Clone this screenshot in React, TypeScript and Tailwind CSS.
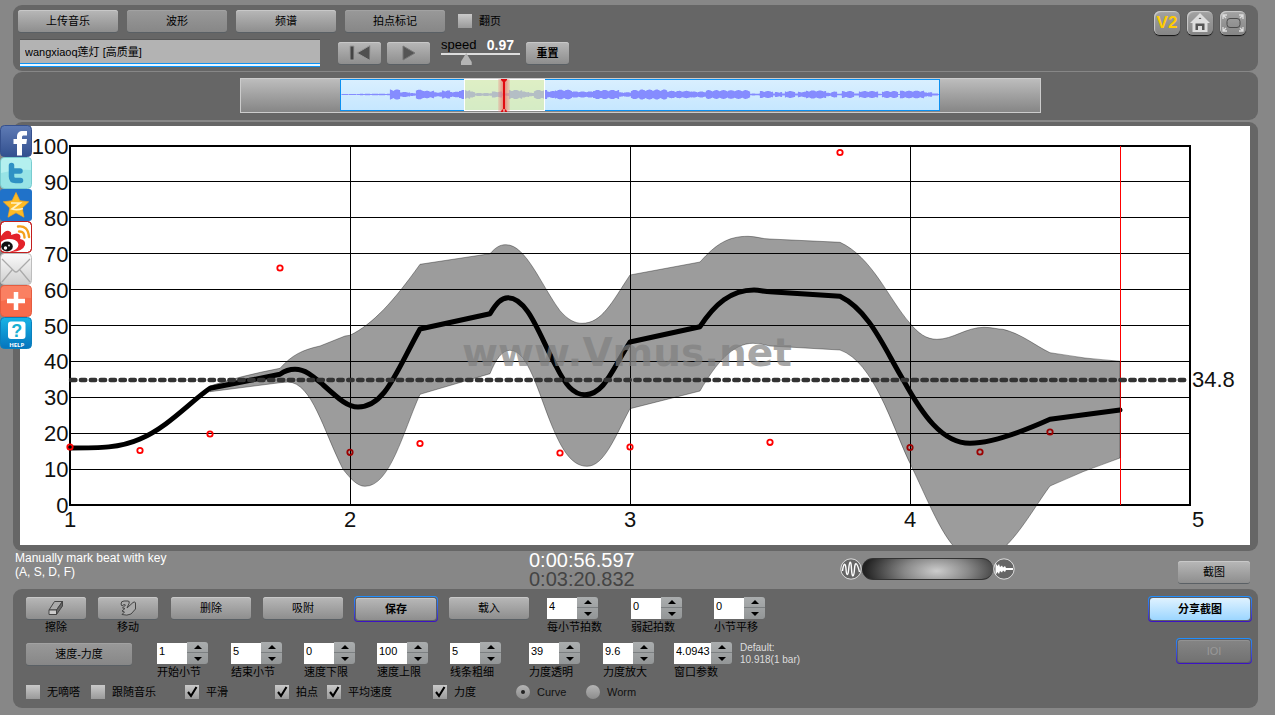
import React from "react";

const LINE =
  "M70 448 C100 448 120 448 140 439 C168 427 190 402 210 388.3 L280 374.3 C286 370 290 369.3 295 369.3 C306 369.3 314 377 323.3 385 C340 400 348 407 358 407 C385 407 396 372 420 329 L490 313.7 C496 304 501 297.7 508 297.7 C528 297.7 540 337 556 366 C565 384 573 394.7 585 394.7 C604 394.7 612 370 630 342 L700 326.7 C715 304 731 290 754 290 C760 290 765 291.7 770 291.7 L840 296.3 C870 311 885 350 903.3 380 C922 414 942 443.3 970 443.3 C990 443 1015 435 1050 419.3 L1120 410";

const BAND =
  "M210 386 Q240 376 280 368.3 C292 355 302 350 320 346 L345 336 L350 335.3 C373 324 393 302 420 264.3 L490 253.7 C496 247 500 244.7 506 244.7 C526 244.7 541 285 560 310.7 C568 320 575 323.3 582 323.3 C602 323.3 612 302 630 275 L700 262 C716 244 728 236.3 748 236.3 C756 236.3 762 239 770 239 L840 242.3 C872 257 888 298 910 323.3 C918 333 926 339.3 937 339.3 C953 339.3 966 327.3 984 327.3 C992 327.3 998 329.3 1003 329.3 C1022 334 1034 345 1050 352.7 Q1085 359 1120 361.3 L1120 458 Q1082 471 1050 486 C1030 513 1006 560 979 560 C950 560 935 515 910 463.3 C892 426 874 362 840 350 L770 346 Q760 343.3 753 343.3 C733 343.3 716 363 700 391 L630 408.7 C615 437 604 466.3 587 466.3 C570 466.3 560 445 552 426 C538 392 528 350.3 510 350.3 C502 350.3 496 359 490 373.7 L420 394.3 C403 432 390 486.3 365 486.3 C357 486.3 350 478 343 469.3 C323 430 312 382.7 288 382 L280 382.7 L210 391.7 Z";

const BEATS = [
  [70, 447], [140, 450.5], [210, 434], [280, 268], [350, 452.3], [420, 443.5],
  [560, 453], [630, 447], [770, 442.3], [840, 152.5], [910, 447.5], [980, 452], [1050, 432],
];

// [end x, amplitude] of each loudness section in the overview
const LOUDNESS = [
  [18, 0.4], [48, 0.7], [58, 4.4], [68, 2.2], [74, 1.2], [82, 4.2], [92, 3.3], [100, 2], [108, 3.6],
  [117, 2.4], [128, 4], [133, 2.6], [150, 1.3], [160, 2.6], [167, 1.2], [180, 4], [187, 2.6], [192, 1.5],
  [205, 4], [213, 3], [230, 4.2], [251, 2.7], [277, 4], [289, 2], [298, 4], [325, 4.3], [350, 3.2],
  [364, 2.6], [408, 3.8], [418, 0.8], [431, 3], [433, 1], [440, 2.2], [443, 1], [453, 3], [456, 1],
  [464, 2.4], [484, 3.5], [489, 1.5], [495, 2.5], [500, 0.8], [512, 3], [517, 1], [536, 3], [540, 0.6],
  [556, 3], [558, 0.6], [582, 3.3], [590, 2], [596, 1], [600, 0.5],
];

const wavePath = () => {
  let d = "";
  let section = 0;
  for (let x = 0; x < 599; x++) {
    while (LOUDNESS[section][0] < x) section++;
    const amp = LOUDNESS[section][1] * (0.8 + 0.35 * Math.abs(Math.sin(x * 12.9898)));
    d += `M${x + 0.5} ${(14.5 - amp).toFixed(1)}V${(14.5 + amp).toFixed(1)}`;
  }
  return d;
};

const TONES = {
  light: "bg-linear-to-b from-[#b8b8b8] to-[#8e8e8e] shadow-[inset_0_1px_0_#c8c8c8,0_1px_0_#5a6065]",
  pressed: "bg-linear-to-b from-[#999] to-[#878787] shadow-[inset_0_1px_0_#a2a2a2,0_1px_0_#5a6065]",
  blue: "bg-linear-to-b from-[#dff2ff] to-[#9cd6ff]",
  disabled: "bg-linear-to-b from-[#858585] to-[#727272] text-[#999] shadow-[inset_0_1px_0_#929292]",
};

type ButtonProps = {
  className?: string;
  label?: string;
  tone?: keyof typeof TONES;
  children: React.ReactNode;
};

const Button = ({ className = "", label, tone = "light", children }: ButtonProps) => (
  <button
    aria-label={label}
    className={`flex h-[22px] shrink-0 items-center justify-center rounded-[3px] text-[11px] leading-none ${TONES[tone]} ${className}`}
  >
    {children}
  </button>
);

const Ring = ({ className = "", children }: { className?: string; children: React.ReactNode }) => (
  <div className={`shrink-0 rounded-[4px] bg-linear-to-b from-[#1e90ff] to-[#3c0cc4] p-px ${className}`}>
    <div className="rounded-[3px] bg-[#5c5f66] p-px">{children}</div>
  </div>
);

const Check = ({ label, checked = false, className = "" }: { label: string; checked?: boolean; className?: string }) => (
  <label className={`flex shrink-0 items-center gap-[7px] text-[11px] leading-[14px] ${className}`}>
    <span className="relative block size-[14px]">
      <input
        type="checkbox"
        defaultChecked={checked}
        className="peer block size-[14px] appearance-none bg-linear-to-b from-[#c9c9c9] to-[#9a9a9a]"
      />
      <svg viewBox="0 0 14 14" className="pointer-events-none absolute inset-0 hidden size-[14px] peer-checked:block">
        <path d="M3 7 L6 11 L11.5 2" fill="none" stroke="#000" strokeWidth="2.1" />
      </svg>
    </span>
    {label}
  </label>
);

const Radio = ({ label, checked = false, className = "" }: { label: string; checked?: boolean; className?: string }) => (
  <label className={`flex shrink-0 items-center gap-[7px] text-[11px] leading-[14px] text-[#111] ${className}`}>
    <span className="relative block size-[14px]">
      <input
        type="radio"
        name="plot"
        defaultChecked={checked}
        className="peer block size-[14px] appearance-none rounded-full bg-linear-to-b from-[#b5b5b5] to-[#8c8c8c]"
      />
      <span className="pointer-events-none absolute top-[5px] left-[5px] hidden size-[4px] rounded-full bg-[#222] peer-checked:block" />
    </span>
    {label}
  </label>
);

type StepperProps = {
  id: string;
  label: string;
  value: string;
  className: string;
  inputClass?: string;
};

const Stepper = ({ id, label, value, className, inputClass = "w-[30px]" }: StepperProps) => (
  <div className={`shrink-0 ${className}`}>
    <div className="flex h-[22px]">
      <input
        id={id}
        type="text"
        defaultValue={value}
        className={`mt-px h-[21px] bg-white pb-[5px] pl-[2px] text-[11px] leading-none outline-none ${inputClass}`}
      />
      <div className="flex w-[21px] flex-col overflow-hidden rounded-r-[3px] bg-linear-to-b from-[#aaadae] to-[#939697]">
        <button aria-label={`${label} +`} className="flex h-[11px] items-center justify-center border-b border-[#7b7f81]">
          <svg viewBox="0 0 8 4" className="h-[4px] w-[8px]"><path d="M0 4 L4 0 L8 4Z" /></svg>
        </button>
        <button aria-label={`${label} -`} className="flex h-[11px] items-center justify-center">
          <svg viewBox="0 0 8 4" className="h-[4px] w-[8px]"><path d="M0 0 L4 4 L8 0Z" /></svg>
        </button>
      </div>
    </div>
    <label htmlFor={id} className="block text-[11px] leading-[16px] whitespace-nowrap">{label}</label>
  </div>
);

const ToolButton = ({ label, children }: { label: string; children: React.ReactNode }) => (
  <button
    aria-label={label}
    className="flex h-[24px] w-[26px] items-center justify-center rounded-[6px] bg-linear-to-b from-[#a3a3a3] to-[#858585] shadow-[inset_1px_1px_1px_#ccc,0_1px_1px_#111]"
  >
    {children}
  </button>
);

const Share = () => (
  <nav className="absolute top-[125px] left-0 flex flex-col">
    <a href="#facebook" aria-label="Facebook">
      <svg viewBox="0 0 32 32" className="block size-8">
        <defs>
          <linearGradient id="fb" x2="0" y2="1"><stop stopColor="#5f7bb5" /><stop offset="1" stopColor="#32508f" /></linearGradient>
        </defs>
        <rect x=".5" y=".5" width="31" height="31" rx="4" fill="url(#fb)" stroke="#35508d" />
        <path d="M17 30.5V19h-3.500v-5H17v-2.500C17 8 19 6 23 6h4v4.500h-3c-1.500 0-2 .6-2 2V14h5l-.7 5H22v11.500z" fill="#fff" />
      </svg>
    </a>
    <a href="#twitter" aria-label="Twitter">
      <svg viewBox="0 0 32 32" className="block size-8">
        <rect x=".5" y=".5" width="31" height="31" rx="4" fill="#98e4e6" stroke="#78ccd0" />
        <path d="M1 5Q1 1 5 1H27Q31 1 31 5V13Q16 12 1 16Z" fill="#b4f0ef" />
        <path d="M11.500 8.500V19.500q0 4 4 4h5M11.500 14h8.500" fill="none" stroke="#2f91c4" strokeWidth="5.500" strokeLinecap="round" />
      </svg>
    </a>
    <a href="#qzone" aria-label="QZone">
      <svg viewBox="0 0 32 32" className="block size-8">
        <rect width="32" height="32" rx="3" fill="#2072c9" />
        <path d="M16 3.500l3.900 8.200 8.800 1.100-6.500 6.200 1.800 9.200L16 23.800 8 28.200l1.800-9.200-6.500-6.200 8.800-1.100z" fill="#fdbb25" stroke="#f8a31b" strokeWidth=".7" />
        <path d="M11 14L20 14L12 20Q17 21.500 23 19.500" fill="none" stroke="#fff2c5" strokeWidth="1.700" />
      </svg>
    </a>
    <a href="#weibo" aria-label="Weibo">
      <svg viewBox="0 0 32 32" className="block size-8">
        <rect x=".5" y=".5" width="31" height="31" rx="4" fill="#fff" stroke="#c31e1e" />
        <path d="M1 15Q5 9 9 10Q12 11 11 14Q18 11 20 14Q21 16 20 18Q26 19 25 24Q23 30 12 31H4Q1 31 1 28Z" fill="#e3232a" />
        <ellipse cx="8.500" cy="24.500" rx="10" ry="6.500" transform="rotate(-8 8.500 24.500)" fill="#fff" />
        <ellipse cx="7" cy="25.500" rx="5.800" ry="5" fill="#111" />
        <circle cx="5.500" cy="27" r="1.700" fill="#fff" /><circle cx="9" cy="24.500" r=".9" fill="#fff" />
        <path d="M18 5.500Q28 4 29 16M19 10.500Q24.500 10 24.500 16.500" fill="none" stroke="#f4a01c" strokeWidth="2.400" strokeLinecap="round" />
        <rect x=".5" y=".5" width="31" height="31" rx="4" fill="none" stroke="#c31e1e" />
      </svg>
    </a>
    <a href="#mail" aria-label="Mail">
      <svg viewBox="0 0 32 32" className="block size-8">
        <defs>
          <linearGradient id="mail" x2="0" y2="1"><stop stopColor="#fafafa" /><stop offset="1" stopColor="#cfcfcf" /></linearGradient>
        </defs>
        <rect x=".5" y=".5" width="31" height="31" rx="4" fill="url(#mail)" stroke="#bdbdbd" />
        <path d="M2 6L14 18Q16 20 18 18L30 6M2 29L12 17M30 29L20 17" fill="none" stroke="#aaa" strokeWidth="1.300" />
      </svg>
    </a>
    <a href="#more" aria-label="More">
      <svg viewBox="0 0 32 32" className="block size-8">
        <rect x=".5" y=".5" width="31" height="31" rx="4" fill="#f76b4c" stroke="#e45c40" />
        <path d="M1 5Q1 1 5 1H27Q31 1 31 5V13Q16 12 1 16Z" fill="#fa8062" />
        <path d="M16 7v18M7 16h18" stroke="#fff" strokeWidth="4.500" />
      </svg>
    </a>
    <a href="#help" aria-label="Help">
      <svg viewBox="0 0 32 32" className="block size-8">
        <defs>
          <linearGradient id="help" x2="0" y2="1"><stop stopColor="#16b4e6" /><stop offset="1" stopColor="#0574bd" /></linearGradient>
        </defs>
        <rect x=".5" y=".5" width="31" height="31" rx="4" fill="url(#help)" stroke="#0a80bd" />
        <rect x="8" y="4.500" width="17.500" height="17.500" rx="3" fill="#fff" />
        <text x="16.700" y="19.500" textAnchor="middle" fontSize="18" fontWeight="700" fill="#17b0d3">?</text>
        <text x="16.700" y="29.500" textAnchor="middle" fontSize="6" fontWeight="700" fontFamily="Open Sans, sans-serif" fill="#fff">HELP</text>
      </svg>
    </a>
  </nav>
);

const Chart = () => (
  <svg viewBox="20 126 1230 419" className="block w-full bg-white" fontSize="22" fill="#111">
    <g stroke="#000" strokeWidth="1" shapeRendering="crispEdges">
      {[1, 2, 3, 4, 5, 6, 7, 8, 9].map((i) => (
        <line key={i} x1="70" x2="1190" y1={Math.floor(505.2 - i * 35.93) + 0.5} y2={Math.floor(505.2 - i * 35.93) + 0.5} />
      ))}
      {[350.5, 630.5, 910.5].map((x) => (
        <line key={x} x1={x} x2={x} y1="146" y2="505" />
      ))}
    </g>
    <rect x="70" y="146" width="1120" height="359" fill="none" stroke="#000" strokeWidth="2" />
    {[0, 10, 20, 30, 40, 50, 60, 70, 80, 90, 100].map((v) => (
      <text key={v} x="68.500" y={513 - v * 3.59} textAnchor="end">{v}</text>
    ))}
    {["1", "2", "3", "4"].map((v, i) => (
      <text key={v} x={70 + i * 280} y="527" textAnchor="middle">{v}</text>
    ))}
    <text x="1192" y="527">5</text>
    <text x="1192" y="387">34.8</text>

    <path d={LINE} fill="none" stroke="#000" strokeWidth="5" strokeLinecap="round" strokeLinejoin="round" />
    {BEATS.map(([x, y]) => (
      <circle key={x} cx={x} cy={y} r="2.700" fill="none" stroke="#f00" strokeWidth="1.800" />
    ))}
    <line x1="1120.500" x2="1120.500" y1="146" y2="505" stroke="#f00" />
    <path d={BAND} fill="#000" fillOpacity=".39" stroke="#000" strokeOpacity=".35" />
    <line x1="71" x2="1187" y1="380" y2="380" stroke="#333" strokeWidth="4.500" strokeLinecap="round" strokeDasharray="4.400 5.500" />
    <text x="462" y="365.500" fontSize="39" fontWeight="700" fontFamily="DejaVu Sans, sans-serif" fill="#808080" fillOpacity=".7">
      www.Vmus.net
    </text>
  </svg>
);

const App = () => {
  return (
    <div className="relative flex min-h-screen flex-col bg-[#878787] pt-[5px] pr-[17px] pl-[13px] font-['Liberation_Sans','Noto_Sans_CJK_SC',sans-serif] text-black">
      <header className="mb-px flex h-[66px] justify-between rounded-[9px] bg-[#666] pt-[5px] pr-[12px] pl-[5px]">
        <div>
          <div className="flex items-center gap-[9px]">
            <Button className="w-[100px]">上传音乐</Button>
            <Button className="w-[100px]" tone="pressed">波形</Button>
            <Button className="w-[100px]">频谱</Button>
            <Button className="w-[100px]" tone="pressed">拍点标记</Button>
            <Check label="翻页" className="ml-[4px]" />
          </div>

          <div className="mt-[7px] flex items-start pl-[2px]">
            <div className="border-b border-[#0c93f5]">
              <div className="border-b-2 border-[#eaf6ff]">
                <input
                  aria-label="music"
                  defaultValue="wangxiaoq莲灯 [高质量]"
                  className="block h-[25px] w-[300px] border-t border-b border-t-[#555] border-b-[#0c93f5] bg-[#b3b3b3] pb-px pl-[5px] text-[11px] outline-none"
                />
              </div>
            </div>
            <Button className="mt-[3px] ml-[18px] w-[43px]" label="rewind">
              <svg viewBox="0 0 22 16" className="h-4 w-[22px]" stroke="#999">
                <path d="M1 1h4v14H1z" fill="#444" />
                <path d="M21 .5V15.500L8 8z" fill="#505050" />
              </svg>
            </Button>
            <Button className="mt-[3px] ml-[6px] w-[43px]" label="play">
              <svg viewBox="0 0 14 16" className="h-4 w-[14px]">
                <path d="M1 1V15L13 8z" fill="#555" stroke="#777" />
              </svg>
            </Button>
            <div className="ml-[11px] w-[79px]">
              <label htmlFor="speed" className="flex h-[12px] items-center justify-between pr-[6px] text-[13px]">
                speed
                <output className="text-sm font-bold text-white">0.97</output>
              </label>
              <input
                id="speed"
                type="range"
                defaultValue="29"
                className="mt-[2px] block h-[12px] w-full appearance-none bg-[linear-gradient(#ddd,#ddd)] bg-[length:100%_2px] bg-no-repeat [&::-webkit-slider-thumb]:h-[12px] [&::-webkit-slider-thumb]:w-[11px] [&::-webkit-slider-thumb]:appearance-none [&::-webkit-slider-thumb]:bg-[#b5b5b5] [&::-webkit-slider-thumb]:[clip-path:polygon(50%_0,100%_75%,100%_100%,0_100%,0_75%)]"
              />
            </div>
            <Button className="mt-[3px] ml-[6px] w-[43px] font-bold">重置</Button>
          </div>
        </div>

        <div className="flex gap-[7px] pt-px">
          <ToolButton label="V2">
            <span className="text-[17px] font-bold text-[#fc0]">V2</span>
          </ToolButton>
          <ToolButton label="home">
            <svg viewBox="0 0 20 20" className="size-5">
              <path d="M0 10L10 0L20 10H17.500V19H2.500V10Z" fill="#ddd" />
              <path d="M5.500 17V10.500h9V17H12v-4H8v4z" fill="#555" />
              <path d="M8.500 6L10 4.500L11.500 6z" fill="#555" />
            </svg>
          </ToolButton>
          <ToolButton label="fullscreen">
            <svg viewBox="0 0 24 20" className="h-5 w-6" fill="none">
              <rect x="6" y="5.500" width="13" height="9" rx="3" stroke="#4c4c4c" />
              <path d="M2 6V2H6M2 2L5 5M18 2H22V6M22 2L19 5M2 14V18H6M2 18L5 15M22 14V18H18M22 18L19 15" stroke="#ddd" strokeWidth="1.300" />
            </svg>
          </ToolButton>
        </div>
      </header>

      <section className="mb-[2px] flex h-[48px] justify-center rounded-[9px] bg-[#666] pt-[6px] pl-[10px]">
        <div className="flex h-[35px] w-[801px] border border-[#ccc] bg-linear-to-b from-[#bdbdbd] to-[#868686] pl-[99px]">
          <div className="relative h-[32px] w-[600px] border border-[#0c90f0] bg-linear-to-b from-[#d9efff] to-[#c6e7ff]">
            <svg viewBox="0 0 598 30" className="block h-[30px] w-full">
              <path d={wavePath()} stroke="#858cff" strokeWidth="1.200" />
            </svg>
            <div className="absolute -top-px left-[123px] h-[32px] w-[81px] border border-white bg-[#e4f08c]/50">
              <div className="absolute -top-px left-[33px] h-[33px] w-[12px] bg-linear-to-r from-[#e88]/20 via-[#e66]/80 to-[#e88]/20">
                <svg viewBox="0 0 12 33" className="block h-[33px] w-[12px]" fill="#e00b10">
                  <path d="M5 0h2v33H5zM3 0h6v1L7 3H5L3 1zM3 33h6v-1L7 30H5L3 32z" />
                </svg>
              </div>
            </div>
          </div>
        </div>
      </section>

      <main className="rounded-[9px] bg-[#666] pt-[4px] pr-[8px] pb-[6px] pl-[7px]">
        <Chart />
      </main>

      <section className="flex h-[38px] justify-between pr-[8px] pl-[2px]">
        <div className="flex">
          <p className="w-[514px] text-xs leading-[14px] text-white">
            Manually mark beat with key<br />(A, S, D, F)
          </p>
          <div className="w-[311px] text-xl leading-[19px]">
            <p className="text-white">0:00:56.597</p>
            <p className="text-[#444]">0:03:20.832</p>
          </div>
          <div className="flex h-[36px] items-center">
            <svg viewBox="0 0 22 22" className="size-[22px]" fill="none">
              <circle cx="11" cy="11" r="10.200" fill="#666" stroke="#ddd" />
              <path d="M2.500 13C3.500 5 5.500 4 6 11S8 19 8.700 11 11 1 11.500 11 14 19 14.500 11 17 4 19.500 14" stroke="#fff" strokeWidth="1.400" />
            </svg>
            <input
              type="range"
              aria-label="volume"
              className="h-[22px] w-[131px] appearance-none rounded-full border-y border-[#333] bg-[radial-gradient(55%_160%_at_57%_60%,#ccc,#888_45%,#222)] [&::-webkit-slider-thumb]:w-0 [&::-webkit-slider-thumb]:appearance-none"
            />
            <svg viewBox="0 0 22 22" className="size-[22px]">
              <circle cx="11" cy="11" r="10.200" fill="#666" stroke="#ddd" />
              <path d="M2.500 5L4.500 8 6 6 7 9 9 7.500 10 9.500 12 8 13 10 20 10V12L13 12 12 14 10 12.500 9 14.500 7 13 6 16 4.500 14 2.500 17Z" fill="#fff" />
            </svg>
          </div>
        </div>
        <Button className="mt-[10px] w-[72px]">截图</Button>
      </section>

      <section className="flex h-[119px] justify-between rounded-[9px] bg-[#666] pt-[8px] pr-[6px] pl-[13px]">
        <div>
          <div className="flex h-[45px] items-start">
            <div className="mr-[12px] text-center text-[11px] leading-[16px]">
              <Button className="w-[60px]" label="擦除">
                <svg viewBox="0 0 18 16" className="h-4 w-[18px]" stroke="#444" strokeLinejoin="round">
                  <path d="M2 10L7.500 1.500H15.500L9.500 10Z" fill="#aaa" />
                  <path d="M2 10H9.500V14.500H2Z" fill="#ccc" />
                  <path d="M9.500 10L15.500 1.500V6L9.500 14.500Z" fill="#666" />
                </svg>
              </Button>
              擦除
            </div>
            <div className="mr-[13px] text-center text-[11px] leading-[16px]">
              <Button className="w-[60px]" label="移动">
                <svg viewBox="0 0 18 16" className="h-4 w-[18px]" fill="#aaa" stroke="#444">
                  <path d="M2 4Q2 1 5 1H9Q11 1 10 3.500L8 8L14 2.500Q16 1 16.500 3V9L12 14Q8 16 3 14.500L5.500 12 3 11 6 8.500 3.500 8 6.500 5 5 4.500 3 6Z" />
                </svg>
              </Button>
              移动
            </div>
            <Button className="mr-[12px] w-[80px]">删除</Button>
            <Button className="mr-[11px] w-[80px]">吸附</Button>
            <Ring className="-mt-px mr-[11px]">
              <Button className="w-[80px] font-bold">保存</Button>
            </Ring>
            <Button className="mr-[18px] w-[80px]">载入</Button>
            <Stepper id="beats" label="每小节拍数" value="4" className="w-[84px]" />
            <Stepper id="pickup" label="弱起拍数" value="0" className="w-[83px]" />
            <Stepper id="shift" label="小节平移" value="0" className="w-[60px]" />
          </div>

          <div className="flex h-[43px] items-start">
            <Button className="mt-px mr-[25px] w-[106px]" tone="pressed">速度-力度</Button>
            <Stepper id="start" label="开始小节" value="1" className="w-[74px]" />
            <Stepper id="end" label="结束小节" value="5" className="w-[73px]" />
            <Stepper id="tempoMin" label="速度下限" value="0" className="w-[73px]" />
            <Stepper id="tempoMax" label="速度上限" value="100" className="w-[73px]" />
            <Stepper id="stroke" label="线条粗细" value="5" className="w-[79px]" />
            <Stepper id="alpha" label="力度透明" value="39" className="w-[74px]" />
            <Stepper id="gain" label="力度放大" value="9.6" className="w-[71px]" />
            <Stepper id="window" label="窗口参数" value="4.0943" className="w-[66px]" inputClass="w-[37px]" />
            <p className="text-[10px] leading-[12px] whitespace-nowrap text-[#ddd]">
              Default:<br />10.918(1 bar)
            </p>
          </div>

          <div className="flex">
            <Check label="无嘀嗒" className="w-[65px]" />
            <Check label="跟随音乐" className="w-[94px]" />
            <Check label="平滑" checked className="w-[90px]" />
            <Check label="拍点" checked className="w-[52px]" />
            <Check label="平均速度" checked className="w-[106px]" />
            <Check label="力度" checked className="w-[83px]" />
            <Radio label="Curve" checked className="w-[70px]" />
            <Radio label="Worm" />
          </div>
        </div>

        <div className="-mt-px flex flex-col items-end gap-[16px]">
          <Ring>
            <Button className="w-[100px] font-bold" tone="blue">分享截图</Button>
          </Ring>
          <Ring>
            <Button className="w-[72px]" tone="disabled">IOI</Button>
          </Ring>
        </div>
      </section>

      <Share />
    </div>
  );
};

export default App;
